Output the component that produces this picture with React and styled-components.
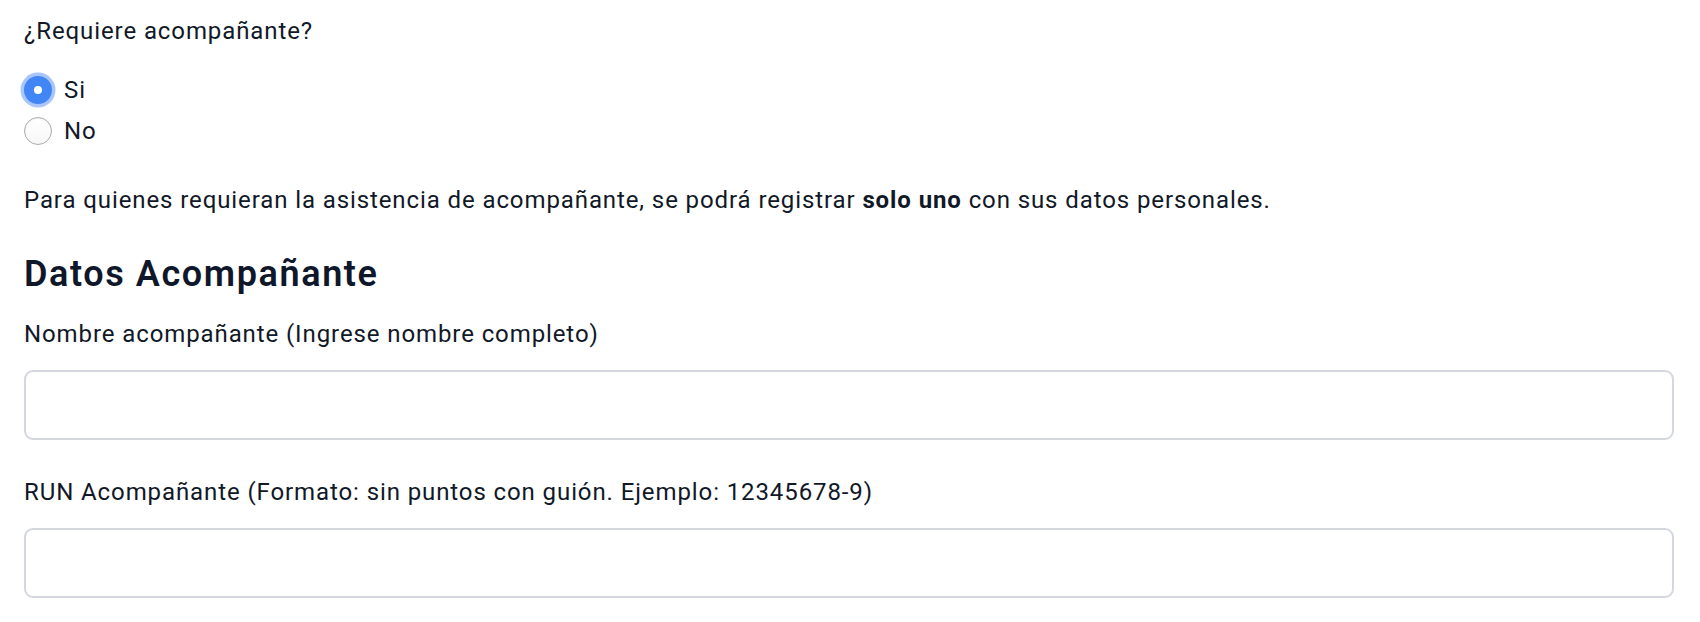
import React, { useState } from "react";
import styled, { createGlobalStyle } from "styled-components";

const GlobalStyle = createGlobalStyle`
  * { box-sizing: border-box; }
  body {
    margin: 0;
    background: #ffffff;
    font-family: Roboto, "Liberation Sans", sans-serif;
    color: #111827;
  }
`;

const Form = styled.form`
  display: flex;
  flex-direction: column;
  padding: 13px 26px 0 24px;
`;

const Question = styled.p`
  margin: 0;
  font-size: 24px;
  line-height: 36px;
  letter-spacing: 0.9px;
`;

const RadioGroup = styled.div`
  display: flex;
  flex-direction: column;
  margin-top: 20px;
`;

const RadioRow = styled.label`
  display: flex;
  align-items: center;
  gap: 12px;
  height: 41px;
  font-size: 24px;
  line-height: 36px;
  letter-spacing: 0.9px;
  cursor: pointer;
`;

const RadioInput = styled.input`
  appearance: none;
  margin: 0;
  width: 28px;
  height: 28px;
  border-radius: 50%;
  border: 1.5px solid #ababab;
  background: linear-gradient(#ffffff, #f7f7f7);
  box-shadow: inset 0 1px 2px rgba(0, 0, 0, 0.06);
  display: grid;
  place-items: center;
  &:checked {
    border: none;
    background: #4285f4;
    box-shadow: 0 0 0 3.5px rgba(110, 160, 248, 0.6);
  }
  &:checked::after {
    content: "";
    width: 8px;
    height: 8px;
    border-radius: 50%;
    background: #ffffff;
  }
`;

const Note = styled.p`
  margin: 31px 0 0;
  font-size: 24px;
  line-height: 36px;
  letter-spacing: 0.9px;
  strong {
    font-weight: 700;
  }
`;

const Heading = styled.h2`
  margin: 35px 0 0;
  font-size: 36px;
  line-height: 42px;
  font-weight: 600;
  letter-spacing: 1.6px;
  color: #0f172a;
`;

const Field = styled.div`
  display: flex;
  flex-direction: column;
  gap: 18px;
  margin-top: ${(p) => p.$top}px;
`;

const Label = styled.label`
  font-size: 24px;
  line-height: 36px;
  letter-spacing: 0.9px;
`;

const TextInput = styled.input`
  height: 70px;
  width: 100%;
  border: 2px solid #d4d8de;
  border-radius: 9px;
  padding: 0 18px;
  font-size: 24px;
  font-family: inherit;
  color: #111827;
  background: #ffffff;
  outline: none;
`;

export default function App() {
  const [companion, setCompanion] = useState("si");

  return (
    <>
      <GlobalStyle />
      <Form onSubmit={(e) => e.preventDefault()}>
        <Question>¿Requiere acompañante?</Question>
        <RadioGroup>
          <RadioRow>
            <RadioInput
              type="radio"
              name="companion"
              checked={companion === "si"}
              onChange={() => setCompanion("si")}
            />
            Si
          </RadioRow>
          <RadioRow>
            <RadioInput
              type="radio"
              name="companion"
              checked={companion === "no"}
              onChange={() => setCompanion("no")}
            />
            No
          </RadioRow>
        </RadioGroup>
        <Note>
          Para quienes requieran la asistencia de acompañante, se podrá registrar{" "}
          <strong>solo uno</strong> con sus datos personales.
        </Note>
        <Heading>Datos Acompañante</Heading>
        <Field $top={21}>
          <Label htmlFor="nombre">Nombre acompañante (Ingrese nombre completo)</Label>
          <TextInput id="nombre" type="text" />
        </Field>
        <Field $top={34}>
          <Label htmlFor="run">
            RUN Acompañante (Formato: sin puntos con guión. Ejemplo: 12345678-9)
          </Label>
          <TextInput id="run" type="text" />
        </Field>
      </Form>
    </>
  );
}
